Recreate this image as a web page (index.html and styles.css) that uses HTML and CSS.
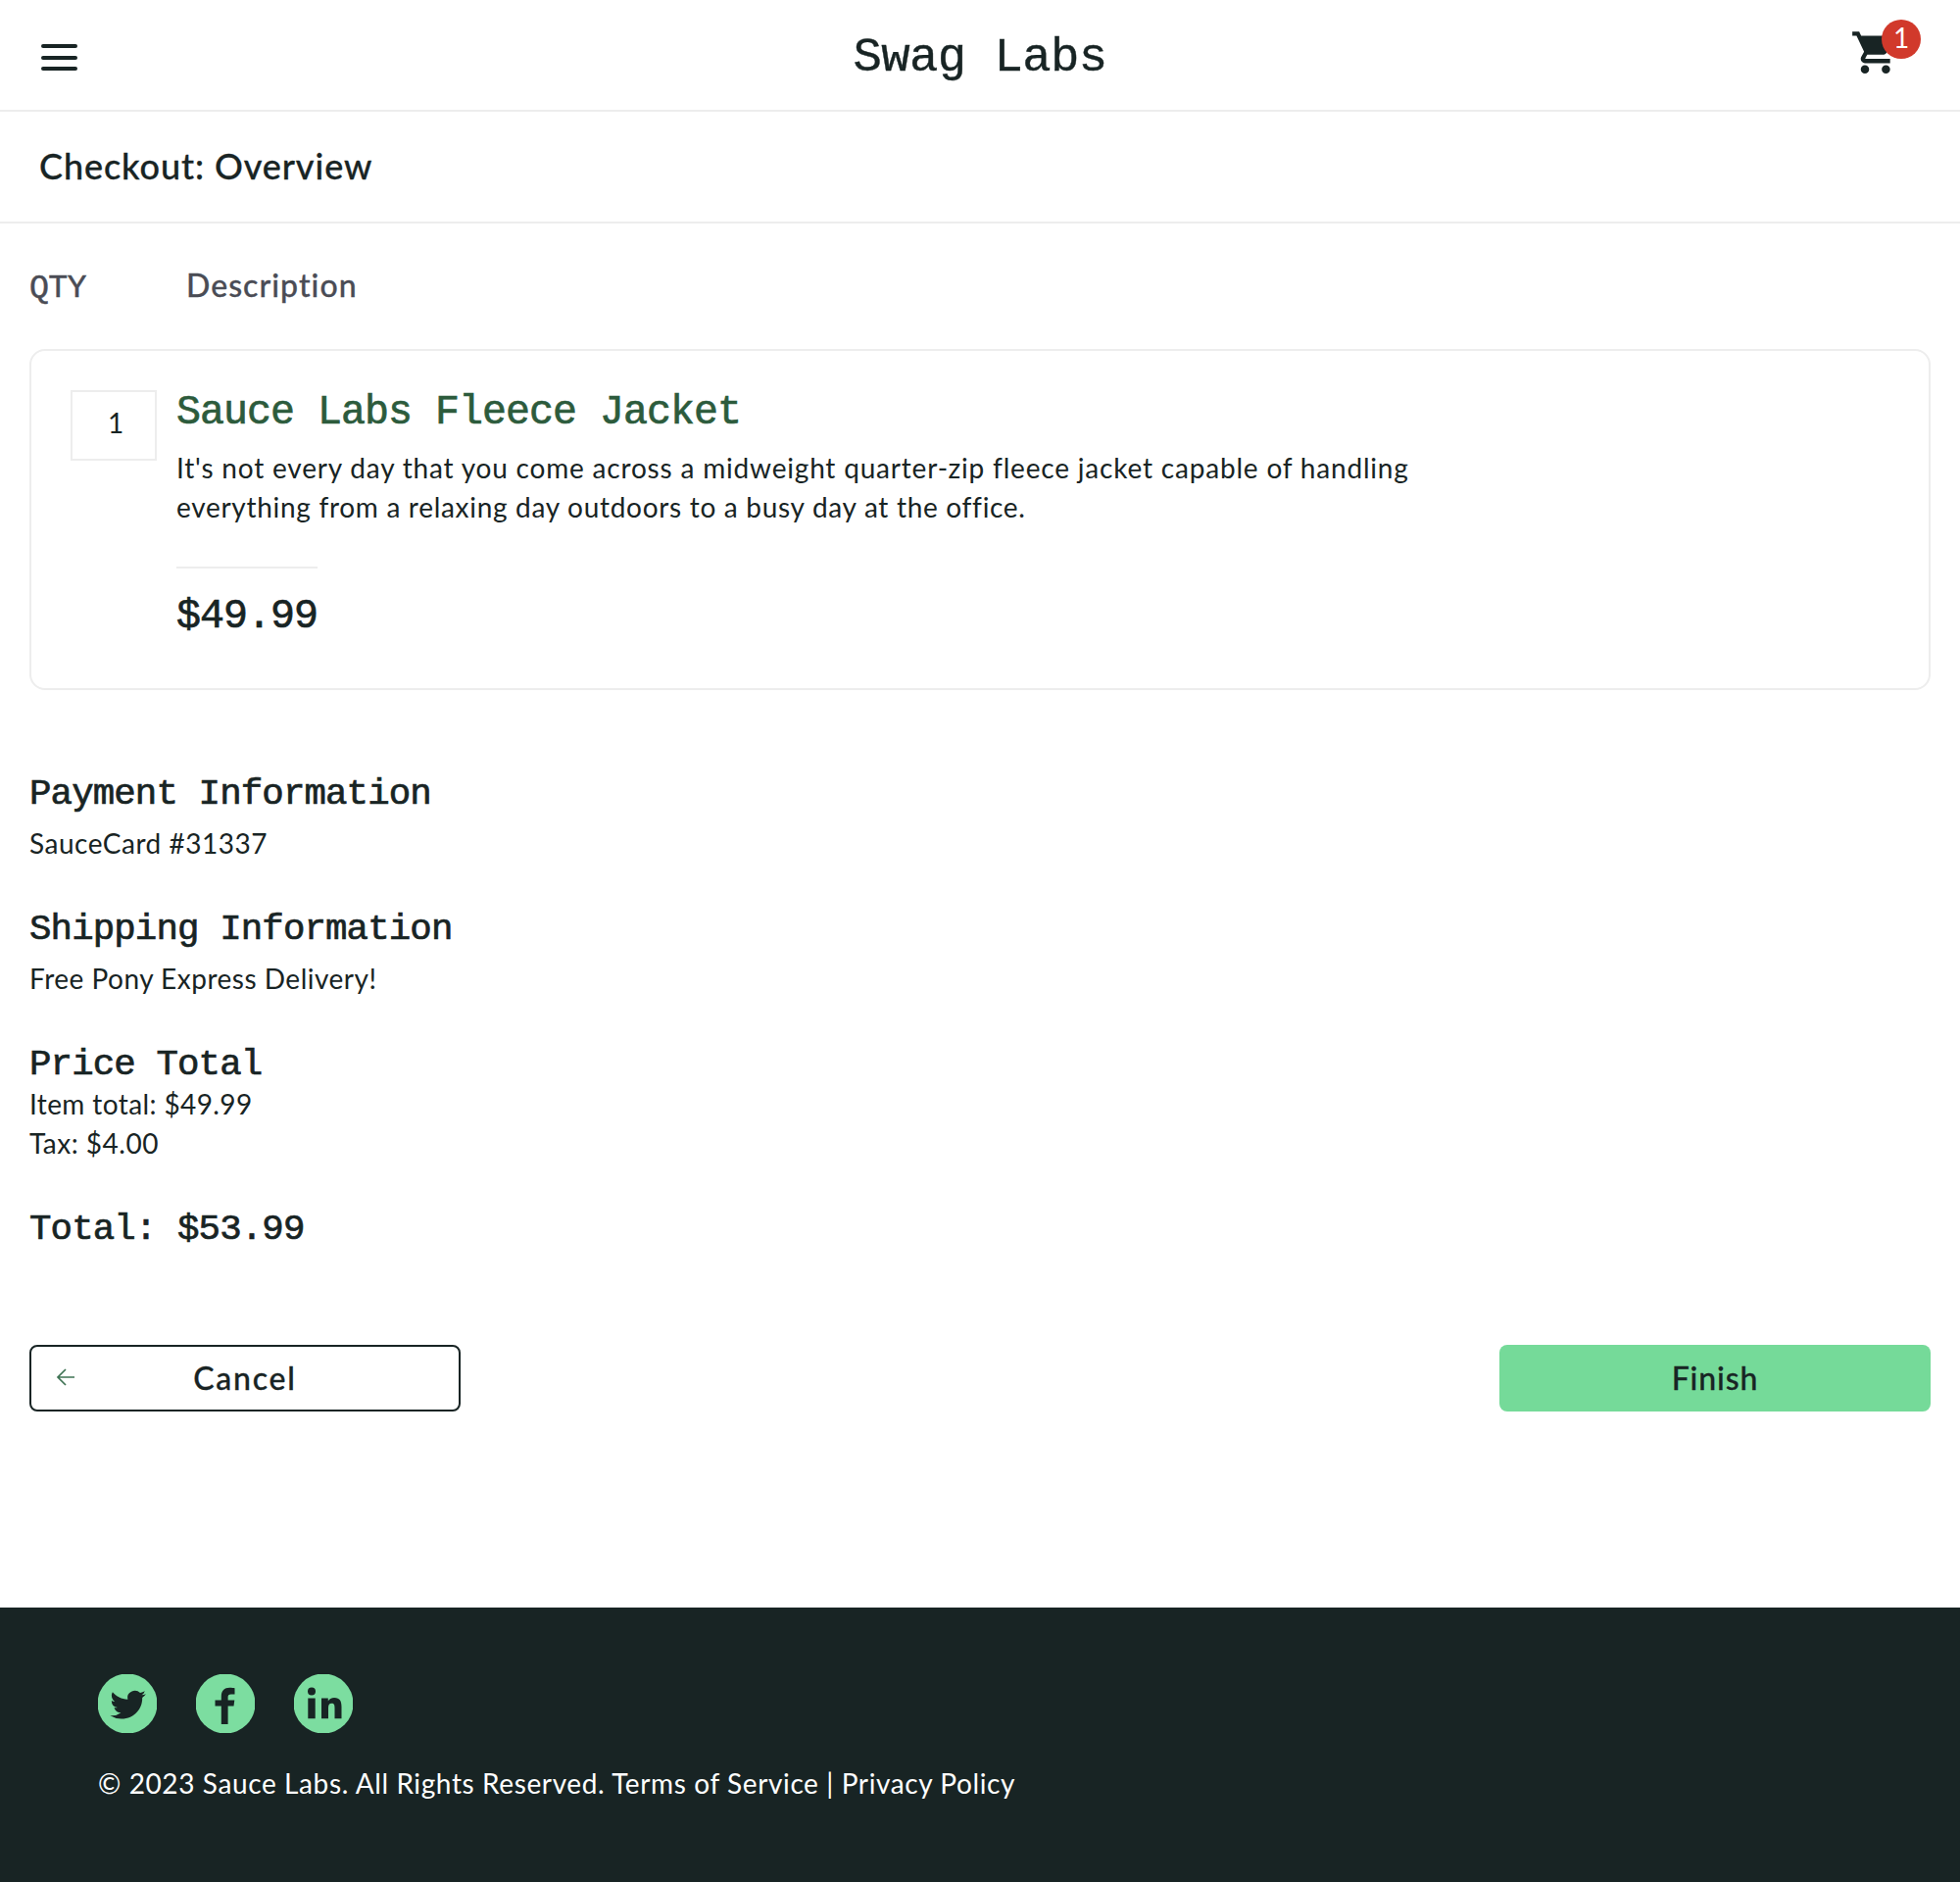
FILE: index.html
```html
<!DOCTYPE html>
<html lang="en">
<head>
<meta charset="utf-8">
<title>Swag Labs</title>
<link rel="stylesheet" href="styles.css">
</head>
<body>
<header class="header">
  <button class="menu" aria-label="Open menu"><span></span><span></span><span></span></button>
  <div class="logo mono">Swag Labs</div>
  <a class="cart" aria-label="Cart">
    <svg class="cart-icon" viewBox="0 0 24 24"><path d="M7 18c-1.1 0-1.99.9-1.99 2S5.9 22 7 22s2-.9 2-2-.9-2-2-2zM1 2v2h2l3.6 7.59-1.35 2.45c-.16.28-.25.61-.25.96 0 1.1.9 2 2 2h12v-2H7.42c-.14 0-.25-.11-.25-.25l.03-.12.9-1.63h7.45c.75 0 1.41-.41 1.75-1.03l3.58-6.49c.08-.14.12-.31.12-.48 0-.55-.45-1-1-1H5.21l-.94-2H1zm16 16c-1.1 0-1.99.9-1.99 2s.89 2 1.99 2 2-.9 2-2-.9-2-2-2z"/></svg>
    <span class="badge">1</span>
  </a>
</header>
<div class="subheader"><h1 class="page-title">Checkout: Overview</h1></div>
<main class="main">
  <div class="labels"><span class="mono label-qty">QTY</span><span class="label-desc">Description</span></div>
  <section class="item">
    <div class="qty">1</div>
    <div class="details">
      <a class="item-name mono medium">Sauce Labs Fleece Jacket</a>
      <p class="item-desc"><span class="line-a">It's not every day that you come across a midweight quarter-zip fleece jacket capable of handling</span><br><span class="line-b">everything from a relaxing day outdoors to a busy day at the office.</span></p>
      <div class="price mono medium">$49.99</div>
    </div>
  </section>
  <section class="summary">
    <h2 class="heading mono medium">Payment Information</h2>
    <p class="value">SauceCard #31337</p>
    <h2 class="heading mono medium">Shipping Information</h2>
    <p class="value">Free Pony Express Delivery!</p>
    <h2 class="heading mono medium">Price Total</h2>
    <p class="amount first">Item total: $49.99</p>
    <p class="amount">Tax: $4.00</p>
    <div class="total mono medium">Total: $53.99</div>
  </section>
  <div class="actions">
    <button class="btn cancel">
      <svg class="arrow" viewBox="0 0 20 18"><path d="M19 9H2M10 1L2 9l8 8"/></svg>
      <span class="btn-label">Cancel</span>
    </button>
    <button class="btn finish"><span>Finish</span></button>
  </div>
</main>
<footer class="footer">
  <div class="social">
    <svg viewBox="0 0 60 60"><circle cx="30" cy="30" r="30.500"/><path transform="translate(12.400 13.500) scale(1.520 1.470)" d="M23.953 4.57a10 10 0 01-2.825.775 4.958 4.958 0 002.163-2.723c-.951.555-2.005.959-3.127 1.184a4.92 4.92 0 00-8.384 4.482C7.69 8.095 4.067 6.13 1.64 3.162a4.822 4.822 0 00-.666 2.475c0 1.71.87 3.213 2.188 4.096a4.904 4.904 0 01-2.228-.616v.06a4.923 4.923 0 003.946 4.827 4.996 4.996 0 01-2.212.085 4.936 4.936 0 004.604 3.417 9.867 9.867 0 01-6.102 2.105c-.39 0-.779-.023-1.17-.067a13.995 13.995 0 007.557 2.209c9.053 0 13.998-7.496 13.998-13.985 0-.21 0-.42-.015-.63A9.935 9.935 0 0024 4.59z"/></svg>
    <svg viewBox="0 0 60 60"><circle cx="30" cy="30" r="30.500"/><path d="M39.5 14.2v6.2h-3.6c-2.600 0-3.300 1-3.300 3.200V26.500h6.700l-.8 6H32.600V51h-6.800V32.500h-6.300v-6h6.300V22.500c0-5.600 3.200-8.700 8.400-8.700 2.300 0 4.200.2 5.300.4z"/></svg>
    <svg viewBox="0 0 60 60"><circle cx="30" cy="30" r="30.500"/><path d="M14.300 24.500h7.400V45.200h-7.400zM18 13.500a4 4 0 110 8 4 4 0 010-8zM28 24.500h6.800v2.900c1.200-2.100 3.400-3.400 6.300-3.400 5.800 0 7.400 3.600 7.400 9.200v12h-7V34.500c0-2.700-.4-4.700-3.100-4.700-2.600 0-3.400 2-3.400 4.700v10.700h-7z"/></svg>
  </div>
  <div class="copy">© 2023 Sauce Labs. All Rights Reserved. Terms of Service | Privacy Policy</div>
</footer>
</body>
</html>
```
FILE: styles.css
```css
* { box-sizing: border-box; margin: 0; padding: 0; }
body { width: 2000px; height: 1920px; display: flex; flex-direction: column; background: #fff; color: #182424; font-family: Lato, sans-serif; font-size: 28px; line-height: 40px; }
button { font: inherit; color: inherit; background: none; border: 0; }
p { white-space: nowrap; }
.mono { font-family: "Liberation Mono", monospace; letter-spacing: -0.0231em; white-space: pre; }
.medium { font-weight: 400; -webkit-text-stroke: 0.7px currentColor; }

.header { height: 114px; border-bottom: 2px solid #ededed; display: grid; grid-template-columns: 1fr auto 1fr; align-items: start; }
.menu { display: flex; flex-direction: column; gap: 7.400px; width: 37px; margin: 45px 0 0 41.500px; }
.menu span { height: 4.200px; border-radius: 2px; background: #182424; }
.logo { font-size: 49px; line-height: 60px; margin-top: 29px; letter-spacing: -0.600px; -webkit-text-stroke: 0.4px currentColor; }
.cart { position: relative; justify-self: end; width: 72px; height: 60px; margin: 20px 40px 0 0; }
.cart-icon { display: block; width: 51.400px; height: 51.400px; margin-top: 8px; fill: #182424; }
.badge { position: absolute; top: 0; right: 0; width: 40px; height: 40px; border-radius: 50%; background: #d1392b; color: #fff; text-align: center; line-height: 37px; }
.subheader { height: 114px; border-bottom: 2px solid #ededed; padding: 31px 40px; }
.page-title { font-size: 36px; font-weight: 500; line-height: 48px; letter-spacing: 0.920px; -webkit-text-stroke: 0.3px currentColor; }

.main { flex: 1; padding: 39px 30px 0; }
.labels { display: grid; grid-template-columns: 160px auto; align-items: baseline; height: 50px; margin-bottom: 39px; color: #4a4c55; line-height: 48px; }
.label-qty { font-size: 33.300px; -webkit-text-stroke: 0.5px currentColor; }
.label-desc { font-size: 32px; font-weight: 500; letter-spacing: 1.050px; -webkit-text-stroke: 0.3px currentColor; }
.item { display: grid; grid-template-columns: 88px 1fr; column-gap: 20px; align-items: start; height: 348px; border: 2px solid #ededed; border-radius: 16px; padding: 39px 40px; }
.qty { height: 72px; margin-top: 1px; border: 2px solid #ededed; text-align: center; line-height: 62px; padding-left: 4px; }
.item-name { display: block; font-size: 41.600px; line-height: 48px; color: #2c5b3c; }
.item-desc { margin-top: 12px; }
.line-a { letter-spacing: 0.810px; }
.line-b { letter-spacing: 0.700px; }
.price { width: 144px; margin-top: 41px; padding-top: 25px; border-top: 2px solid #ededed; font-size: 41.600px; line-height: 48px; }

.summary { margin-top: 87px; letter-spacing: 0.500px; }
.heading { font-size: 37.400px; line-height: 38px; }
.value { margin: 11px 0 49px; }
.first { margin-top: 1px; letter-spacing: 0.390px; }
.total { font-size: 37.400px; line-height: 38px; margin-top: 49px; }
.actions { display: flex; justify-content: space-between; margin-top: 99px; }
.btn { display: grid; grid-template-columns: 1fr; align-items: center; width: 440px; height: 68px; border-radius: 8px; font-size: 32px; font-weight: 500; text-align: center; letter-spacing: 0.900px; -webkit-text-stroke: 0.3px currentColor; }
.btn > * { grid-area: 1 / 1; }
.cancel { border: 2px solid #182424; letter-spacing: 1.800px; }
.finish { background: #75da99; }
.arrow { width: 20px; height: 18px; margin: 0 0 3px 25px; fill: none; stroke: #3f7354; stroke-width: 1.700; }

.footer { height: 280px; background: #182424; color: #fff; padding: 68px 100px 0; }
.social { display: flex; gap: 40px; }
.social svg { width: 60px; height: 60px; overflow: hidden; fill: #182424; }
.social circle { fill: #7cdda0; }
.copy { margin-top: 31px; letter-spacing: 0.610px; }
```
